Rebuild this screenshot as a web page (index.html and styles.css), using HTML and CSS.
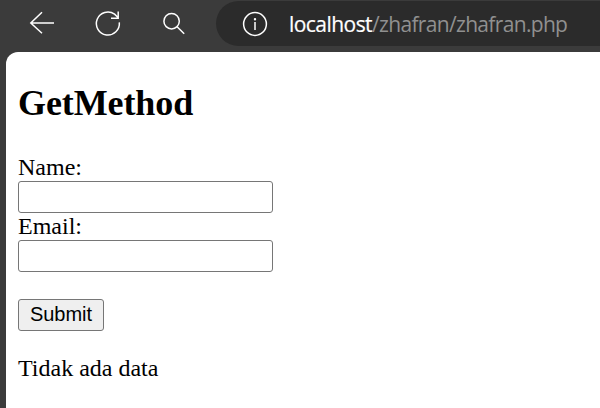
FILE: index.html
```html
<!DOCTYPE html>
<html lang="id">
<head>
<meta charset="utf-8">
<title>GetMethod</title>
<link rel="stylesheet" href="styles.css">
</head>
<body>
<header class="toolbar">
  <svg class="nav" viewBox="0 0 216 48" aria-hidden="true">
    <path d="M54 23H31M42 12.3L30.8 23L42 33.3"/>
    <path d="M119.3 22.3A11.5 11.5 0 1 1 114.6 14.2L118 17.5M118.2 11.5V18.2H111"/>
    <circle cx="171.6" cy="21.2" r="7.7"/>
    <path d="M177.1 26.7L184.2 33.7"/>
  </svg>
  <div class="address">
    <svg class="info" viewBox="0 0 26 26" aria-hidden="true">
      <circle cx="13" cy="13" r="11.4"/>
      <path d="M13 11V19"/>
      <circle class="dot" cx="13" cy="8.2" r="1.2"/>
    </svg>
    <span class="url"><span class="host">localhost</span><span class="path">/zhafran/zhafran.php</span></span>
  </div>
</header>
<main class="page">
  <h2>GetMethod</h2>
  <form>
    <label for="name">Name:</label>
    <input type="text" id="name">
    <label for="email">Email:</label>
    <input type="text" id="email">
    <button type="button">Submit</button>
  </form>
  <p>Tidak ada data</p>
</main>
</body>
</html>
```
FILE: styles.css
```css
* { box-sizing: border-box; }
body {
  margin: 0;
  height: 408px;
  overflow: hidden;
  display: flex;
  flex-direction: column;
  background: #3b3b3b;
}
.toolbar {
  display: flex;
  height: 52px;
  flex: none;
}
.nav { width: 216px; height: 48px; }
.nav, .info { fill: none; stroke: #fff; stroke-width: 1.5; flex: none; }
.info .dot { fill: #fff; stroke: none; }
.address {
  flex: 1;
  height: 45px;
  margin-top: 1px;
  padding-left: 26px;
  display: flex;
  align-items: center;
  background: #2b2b2b;
  border-radius: 23px 0 0 23px;
}
.info { width: 26px; height: 26px; }
.url {
  margin-left: 21px;
  font: 21px/30px "Open Sans", "Noto Sans", sans-serif;
  white-space: nowrap;
}
.host { color: #fff; letter-spacing: -0.55px; -webkit-text-stroke: 0.2px #fff; }
.path { color: #909090; letter-spacing: -0.67px; }
.page {
  flex: 1;
  margin-left: 6px;
  padding: 31px 12px 0;
  background: #fff;
  border-top-left-radius: 12px;
  color: #000;
  font: 24px/27px "Liberation Serif", serif;
}
h2 { margin: 0 0 30px; font-size: 36px; line-height: 41px; letter-spacing: -0.1px; }
form { display: flex; flex-direction: column; align-items: flex-start; }
input {
  width: 255px;
  height: 32px;
  border: 1px solid #767676;
  border-radius: 3px;
  background: #fff;
}
button {
  width: 86px;
  height: 32px;
  margin-top: 27px;
  padding: 0 0 1px;
  border: 1px solid #767676;
  border-radius: 3px;
  background: #efefef;
  color: #000;
  font: 20px/23px "Liberation Sans", sans-serif;
}
p { margin: 24px 0 0; }
```
